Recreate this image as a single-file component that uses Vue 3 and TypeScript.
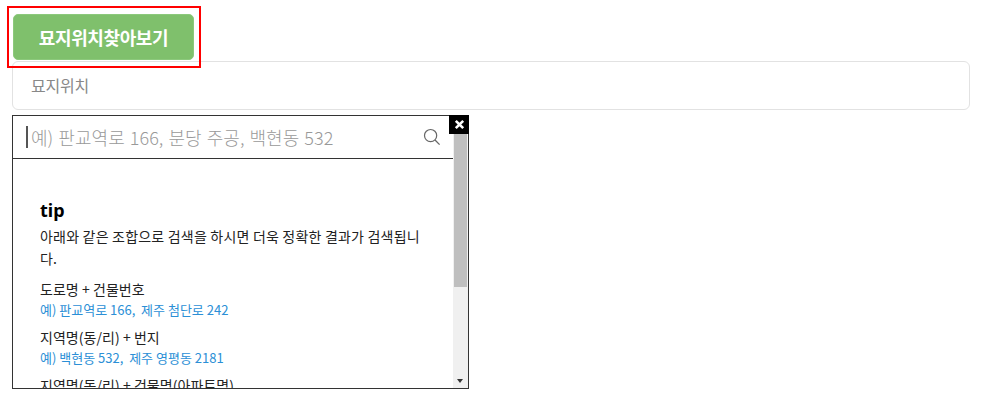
<script setup lang="ts">
interface Tip { label: string; example?: string }
const tips: Tip[] = [
  { label: '도로명 + 건물번호', example: '예) 판교역로 166,  제주 첨단로 242' },
  { label: '지역명(동/리) + 번지', example: '예) 백현동 532,  제주 영평동 2181' },
  { label: '지역명(동/리) + 건물명(아파트명)' },
]
</script>

<template>
  <div class="page">
    <div class="btn-wrap">
      <button class="find-btn" type="button">묘지위치찾아보기</button>
      <div class="highlight"></div>
    </div>
    <div class="location">묘지위치</div>
    <div class="popup">
      <div class="close" aria-label="닫기">
        <svg width="11" height="11" viewBox="0 0 11 11"><path d="M1.8 1.8l7.4 7.4M9.2 1.8l-7.4 7.4" stroke="#fff" stroke-width="2.6" fill="none"/></svg>
      </div>
      <div class="main">
        <div class="search">
          <span class="caret"></span>
          <span class="placeholder">예) 판교역로 166, 분당 주공, 백현동 532</span>
          <svg class="glass" width="18" height="18" viewBox="0 0 18 18">
            <circle cx="7.6" cy="7.6" r="6.1" stroke="#666" stroke-width="1.2" fill="none"/>
            <path d="M12 12l4.6 4.6" stroke="#666" stroke-width="1.3" fill="none"/>
          </svg>
        </div>
        <div class="body">
          <h3 class="tip-title">tip</h3>
          <p class="tip-desc">아래와 같은 조합으로 검색을 하시면 더욱 정확한 결과가 검색됩니다.</p>
          <div v-for="t in tips" :key="t.label" class="tip">
            <div class="tip-label">{{ t.label }}</div>
            <div v-if="t.example" class="tip-example">{{ t.example }}</div>
          </div>
        </div>
      </div>
      <div class="scrollbar">
        <div class="thumb"></div>
        <div class="arrow"></div>
      </div>
    </div>
  </div>
</template>

<style scoped>
.page {
  box-sizing: border-box;
  width: 988px;
  height: 404px;
  padding: 14px 18px 0 12px;
  overflow: hidden;
  font-family: "Noto Sans CJK KR", "Noto Sans", sans-serif;
  color: #222;
  background: #fff;
}
.btn-wrap {
  position: relative;
  width: 181px;
  height: 46px;
  margin-left: 1px;
}
.find-btn {
  display: block;
  width: 100%;
  height: 100%;
  border: 1px solid #8cc97c;
  border-radius: 5px;
  background: #7fc06c;
  color: #fff;
  font: 700 18px "Noto Sans CJK KR", sans-serif;
  letter-spacing: -0.4px;
  padding: 0;
}
.highlight {
  position: absolute;
  left: -6px;
  top: -8px;
  width: 194px;
  height: 62px;
  box-sizing: border-box;
  border: 2px solid #f00;
  pointer-events: none;
}
.location {
  box-sizing: border-box;
  height: 49px;
  margin-top: 1px;
  padding: 0 18px;
  border: 1px solid #e2e2e2;
  border-radius: 6px;
  font-size: 16px;
  line-height: 47px;
  letter-spacing: -0.2px;
  color: #888;
}
.popup {
  position: relative;
  display: flex;
  box-sizing: border-box;
  width: 457px;
  height: 274px;
  margin-top: 5px;
  border: 1px solid #333;
}
.close {
  position: absolute;
  z-index: 1;
  top: -1px;
  right: -1px;
  width: 20px;
  height: 19px;
  background: #000;
  display: flex;
  align-items: center;
  justify-content: center;
}
.main {
  flex: 1;
  min-width: 0;
  overflow: hidden;
}
.search {
  display: flex;
  align-items: center;
  box-sizing: border-box;
  height: 43px;
  padding: 0 13px;
  border-bottom: 1px solid #333;
}
.caret {
  width: 2px;
  height: 22px;
  background: #555;
  margin-right: 3px;
}
.placeholder {
  flex: 1;
  font-size: 18px;
  font-weight: 300;
  letter-spacing: 0.05px;
  word-spacing: 1px;
  color: #999;
  white-space: nowrap;
}
.glass {
  margin-right: -1px;
}
.body {
  padding: 39px 27px 0;
}
.tip-title {
  margin: 0;
  font: 700 18px/24px "Noto Sans", "Noto Sans CJK KR", sans-serif;
  color: #000;
}
.tip-desc {
  margin: 3px 0 0;
  font-size: 14px;
  line-height: 22px;
  letter-spacing: 0.2px;
  color: #222;
}
.tip {
  margin-top: 9px;
}
.tip + .tip {
  margin-top: 7px;
}
.tip-label {
  font-size: 14px;
  line-height: 22px;
  letter-spacing: 0.05px;
  color: #222;
}
.tip-example {
  font-size: 13px;
  line-height: 19px;
  white-space: pre;
  color: #2b8fd6;
}
.scrollbar {
  position: relative;
  flex: none;
  width: 15px;
  background: #f0f0f0;
}
.thumb {
  width: 13px;
  height: 155px;
  margin: 16px auto 0;
  background: #bfbfbf;
}
.arrow {
  position: absolute;
  left: 4px;
  bottom: 5px;
  width: 0;
  height: 0;
  border-left: 3.5px solid transparent;
  border-right: 3.5px solid transparent;
  border-top: 4px solid #333;
}
</style>
